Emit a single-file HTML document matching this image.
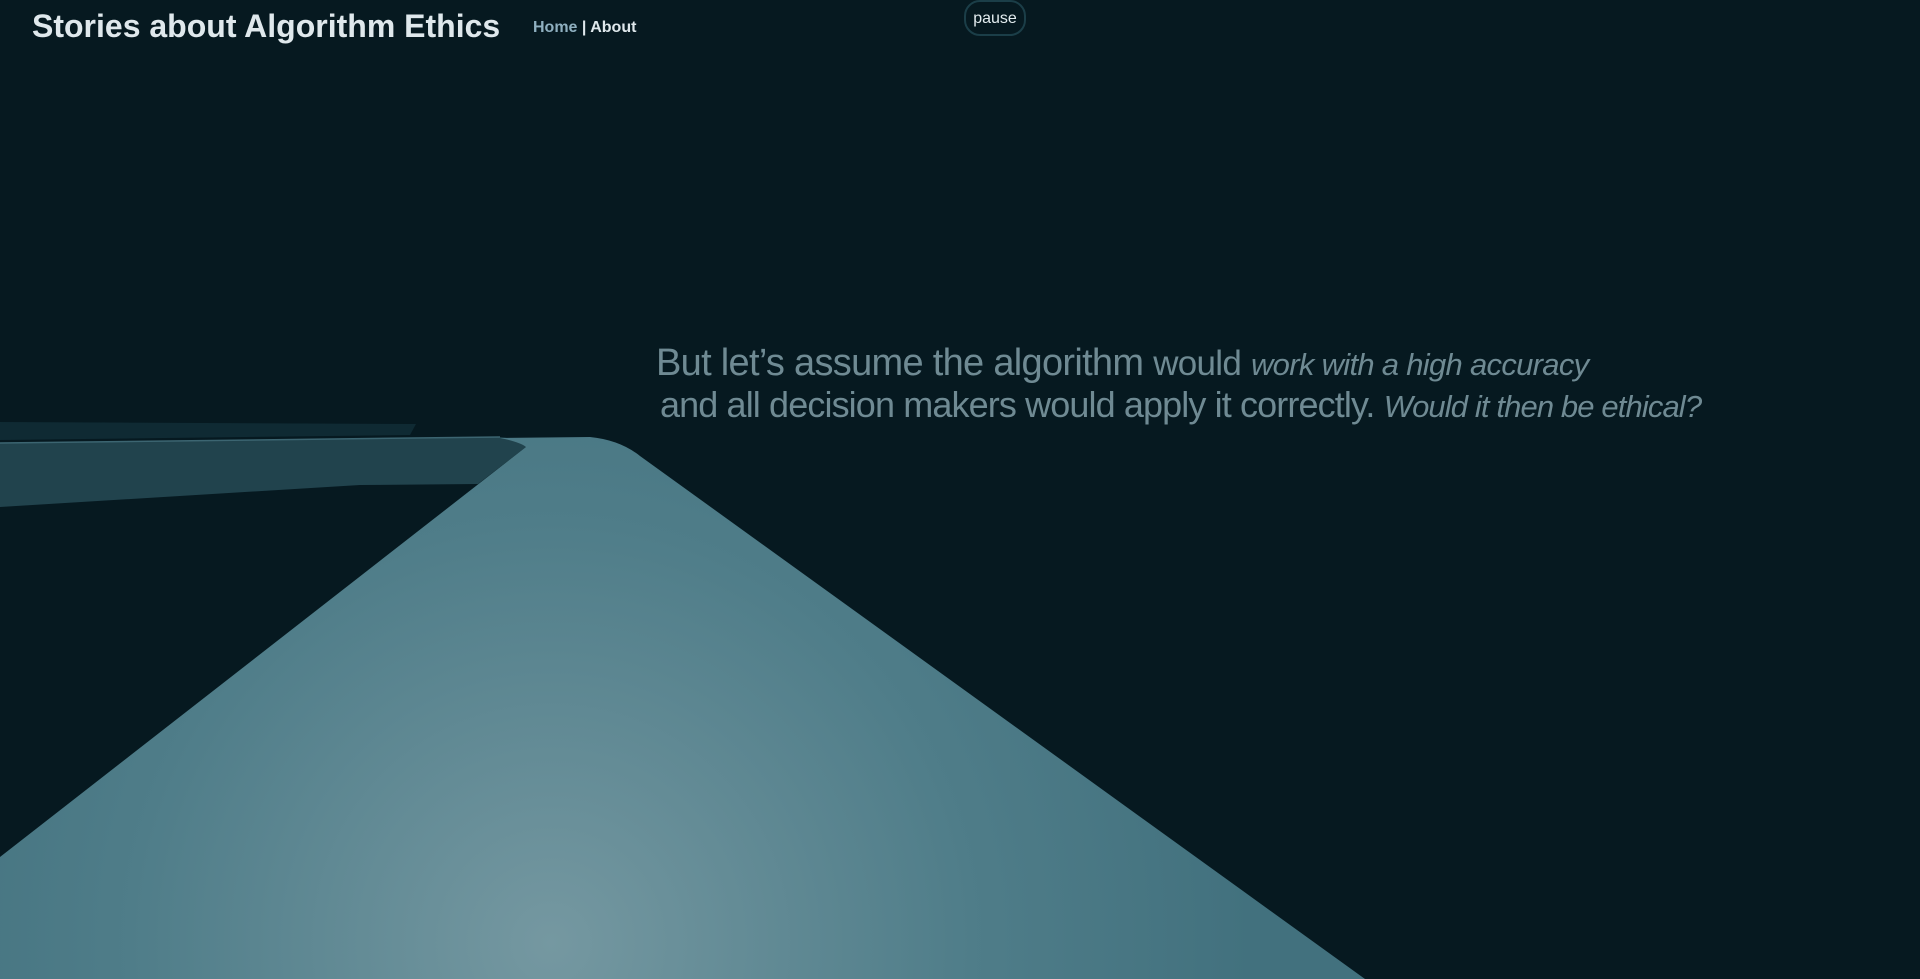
<!DOCTYPE html>
<html><head><meta charset="utf-8"><style>
html,body{margin:0;padding:0;width:1920px;height:979px;overflow:hidden;background:#061920;font-family:"Liberation Sans",Arial,sans-serif;}
svg{position:absolute;left:0;top:0}
.title{position:absolute;left:32px;top:8px;font-size:32px;font-weight:bold;color:#dfe8ec;white-space:nowrap;letter-spacing:0px}
.nav{position:absolute;left:533px;top:19px;font-size:16px;font-weight:bold;color:#dfe8ec;white-space:nowrap}
.nav .h{color:#8fb0c0}
.pause{position:absolute;left:964px;top:0px;width:62px;height:36px;border:2px solid #1b3e48;border-radius:16px;box-sizing:border-box;color:#e3ecef;font-size:16px;text-align:center;line-height:34px}
.t{position:absolute;color:#6f8a93;white-space:nowrap}
</style></head><body>
<svg width="1920" height="979" viewBox="0 0 1920 979">
<defs>
<radialGradient id="g" cx="551" cy="943" r="700" gradientUnits="userSpaceOnUse">
<stop offset="0" stop-color="#7598a1"/><stop offset="0.6" stop-color="#4f7d89"/><stop offset="1" stop-color="#42717e"/>
</radialGradient>
</defs>
<path d="M0 422 L416 424 L410 435 L0 440 Z" fill="#0f2a33"/>
<path d="M0 443 L500 437 Q525 440 526 447 L478 484 L360 485 L0 507 Z" fill="#21434d"/>
<path d="M0 443 L500 437" stroke="#3c6571" stroke-width="1.5"/>
<path d="M526 447 Q520 442 500 438 L590 437 Q620 440 640 456 L1365 979 L0 979 L0 857 Z" fill="url(#g)"/>
</svg>
<div class="title">Stories about Algorithm Ethics</div>
<div class="nav"><span class="h">Home</span> | About</div>
<div class="pause">pause</div>
<div class="t" style="left:656px;top:342px;font-size:38px;letter-spacing:-0.7px">But let’s assume the algorithm <span style="font-size:35px">would</span> <i style="font-size:31px">work with a high accuracy</i></div>
<div class="t" style="left:660px;top:384px;font-size:36px;letter-spacing:-0.88px">and all decision makers would apply it correctly. <i style="font-size:31px">Would it then be ethical?</i></div>
</body></html>
